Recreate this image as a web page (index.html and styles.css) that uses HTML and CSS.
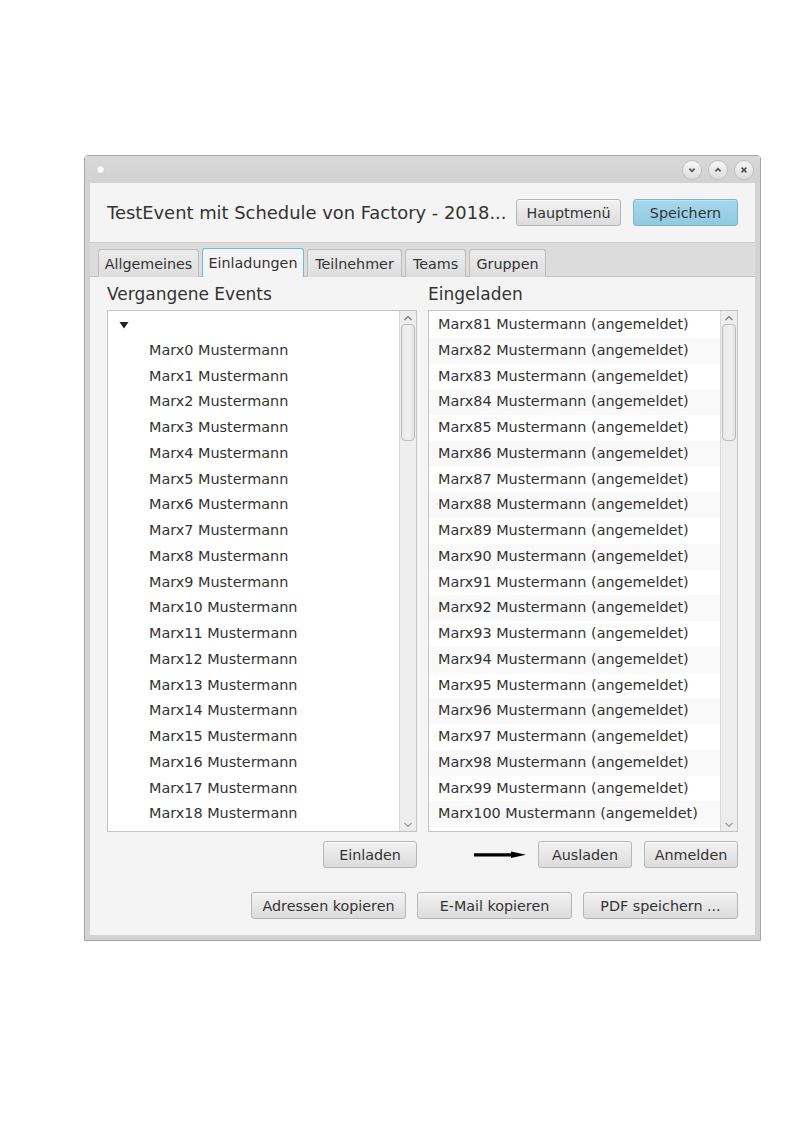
FILE: index.html
```html
<!DOCTYPE html>
<html lang="de">
<head>
<meta charset="utf-8">
<title>TestEvent</title>
<link rel="stylesheet" href="styles.css">
</head>
<body>
<div class="window">
  <div class="titlebar">
    <span class="dot"></span>
    <div class="controls">
      <span class="ctl"><svg width="10" height="10" viewBox="0 0 10 10"><path d="M2.4 3.6 L5 6.3 L7.6 3.6" fill="none" stroke="#555" stroke-width="1.7"/></svg></span>
      <span class="ctl"><svg width="10" height="10" viewBox="0 0 10 10"><path d="M2.4 6.4 L5 3.7 L7.6 6.4" fill="none" stroke="#555" stroke-width="1.7"/></svg></span>
      <span class="ctl"><svg width="10" height="10" viewBox="0 0 10 10"><path d="M2.6 2.6 L7.4 7.4 M7.4 2.6 L2.6 7.4" fill="none" stroke="#555" stroke-width="1.7"/></svg></span>
    </div>
  </div>
  <div class="client">
    <div class="header">
      <div class="title">TestEvent mit Schedule von Factory - 2018...</div>
      <button class="btn hb">Hauptmenü</button>
      <button class="btn hb primary">Speichern</button>
    </div>
    <div class="tabs">
      <div class="tab t1">Allgemeines</div>
      <div class="tab t2 active">Einladungen</div>
      <div class="tab t3">Teilnehmer</div>
      <div class="tab t4">Teams</div>
      <div class="tab t5">Gruppen</div>
    </div>
    <div class="pane">
      <div class="cols">
        <div class="col">
          <div class="label">Vergangene Events</div>
          <div class="list">
            <div class="rows">
              <div class="row root"><svg width="10" height="8" viewBox="0 0 10 8"><path d="M0.5 1 L9.5 1 L5 7.5 Z" fill="#222"/></svg></div>
              <div class="row child">Marx0 Mustermann</div>
              <div class="row child">Marx1 Mustermann</div>
              <div class="row child">Marx2 Mustermann</div>
              <div class="row child">Marx3 Mustermann</div>
              <div class="row child">Marx4 Mustermann</div>
              <div class="row child">Marx5 Mustermann</div>
              <div class="row child">Marx6 Mustermann</div>
              <div class="row child">Marx7 Mustermann</div>
              <div class="row child">Marx8 Mustermann</div>
              <div class="row child">Marx9 Mustermann</div>
              <div class="row child">Marx10 Mustermann</div>
              <div class="row child">Marx11 Mustermann</div>
              <div class="row child">Marx12 Mustermann</div>
              <div class="row child">Marx13 Mustermann</div>
              <div class="row child">Marx14 Mustermann</div>
              <div class="row child">Marx15 Mustermann</div>
              <div class="row child">Marx16 Mustermann</div>
              <div class="row child">Marx17 Mustermann</div>
              <div class="row child">Marx18 Mustermann</div>
            </div>
            <div class="scrollbar">
              <svg class="arr" width="10" height="6" viewBox="0 0 10 6"><path d="M1.5 5 L5 1.5 L8.5 5" fill="none" stroke="#777" stroke-width="1.2"/></svg>
              <div class="track"><div class="thumb"></div></div>
              <svg class="arr" width="10" height="6" viewBox="0 0 10 6"><path d="M1.5 1 L5 4.5 L8.5 1" fill="none" stroke="#999" stroke-width="1.2"/></svg>
            </div>
          </div>
          <div class="actions">
            <button class="btn ab">Einladen</button>
          </div>
        </div>
        <div class="col">
          <div class="label">Eingeladen</div>
          <div class="list">
            <div class="rows striped">
              <div class="row">Marx81 Mustermann (angemeldet)</div>
              <div class="row">Marx82 Mustermann (angemeldet)</div>
              <div class="row">Marx83 Mustermann (angemeldet)</div>
              <div class="row">Marx84 Mustermann (angemeldet)</div>
              <div class="row">Marx85 Mustermann (angemeldet)</div>
              <div class="row">Marx86 Mustermann (angemeldet)</div>
              <div class="row">Marx87 Mustermann (angemeldet)</div>
              <div class="row">Marx88 Mustermann (angemeldet)</div>
              <div class="row">Marx89 Mustermann (angemeldet)</div>
              <div class="row">Marx90 Mustermann (angemeldet)</div>
              <div class="row">Marx91 Mustermann (angemeldet)</div>
              <div class="row">Marx92 Mustermann (angemeldet)</div>
              <div class="row">Marx93 Mustermann (angemeldet)</div>
              <div class="row">Marx94 Mustermann (angemeldet)</div>
              <div class="row">Marx95 Mustermann (angemeldet)</div>
              <div class="row">Marx96 Mustermann (angemeldet)</div>
              <div class="row">Marx97 Mustermann (angemeldet)</div>
              <div class="row">Marx98 Mustermann (angemeldet)</div>
              <div class="row">Marx99 Mustermann (angemeldet)</div>
              <div class="row">Marx100 Mustermann (angemeldet)</div>
            </div>
            <div class="scrollbar">
              <svg class="arr" width="10" height="6" viewBox="0 0 10 6"><path d="M1.5 5 L5 1.5 L8.5 5" fill="none" stroke="#777" stroke-width="1.2"/></svg>
              <div class="track"><div class="thumb"></div></div>
              <svg class="arr" width="10" height="6" viewBox="0 0 10 6"><path d="M1.5 1 L5 4.5 L8.5 1" fill="none" stroke="#999" stroke-width="1.2"/></svg>
            </div>
          </div>
          <div class="actions">
            <svg class="pointer" width="52" height="10" viewBox="0 0 52 10"><path d="M0 3.2 H42 V6.4 H0 Z" fill="#000"/><path d="M37 1.6 L52 4.8 L37 8 Z" fill="#000"/></svg>
            <button class="btn ab">Ausladen</button>
            <button class="btn ab">Anmelden</button>
          </div>
        </div>
      </div>
      <div class="footer">
        <button class="btn fb">Adressen kopieren</button>
        <button class="btn fb">E-Mail kopieren</button>
        <button class="btn fb">PDF speichern ...</button>
      </div>
    </div>
  </div>
</div>
</body>
</html>
```
FILE: styles.css
```css
* { box-sizing: border-box; }
html, body { margin: 0; padding: 0; background: #ffffff; }
body {
  font-family: "DejaVu Sans", "Liberation Sans", sans-serif;
  color: #333333;
  padding: 155px 0 0 84px;
}
.window {
  width: 677px;
  height: 786px;
  background: #d3d3d3;
  border: 1px solid #a5a5a5;
  border-radius: 4px 4px 0 0;
  display: flex;
  flex-direction: column;
}
.titlebar {
  height: 27px;
  display: flex;
  align-items: center;
  padding: 0 0 0 12px;
  background: linear-gradient(#d9d9d9, #d1d1d1);
}
.dot {
  width: 7px; height: 7px; border-radius: 50%;
  background: #f7f7f7;
  box-shadow: 0 0 1px #aaa;
}
.controls { margin-left: auto; display: flex; gap: 6px; padding-right: 6px; }
.ctl {
  width: 20px; height: 20px; border-radius: 50%;
  background: linear-gradient(#f6f6f6, #dddddd);
  border: 1px solid #c0c0c0;
  display: flex; align-items: center; justify-content: center;
}
.client {
  flex: 1;
  margin: 0 5px 5px 5px;
  display: flex;
  flex-direction: column;
  background: #f4f4f4;
}
.header {
  height: 59px;
  display: flex;
  align-items: center;
  padding: 0 17px 0 17px;
}
.title {
  font-size: 17.9px; color: #333;
  white-space: nowrap;
  margin-right: auto;
}
.btn {
  font-family: "DejaVu Sans", "Liberation Sans", sans-serif;
  font-size: 14.3px;
  color: #333;
  height: 27px;
  border: 1px solid #b6b6b6;
  border-radius: 3px;
  background: linear-gradient(#f2f2f2, #dcdcdc);
  padding: 0;
  box-shadow: inset 0 1px 0 #fbfbfb;
  flex: none;
}
.hb { width: 105px; }
.hb + .hb { margin-left: 12px; }
.primary {
  background: linear-gradient(#a8d8ec, #8ec9e2);
  border-color: #84b1c5;
  box-shadow: inset 0 1px 0 #bfe3f2;
}
.tabs {
  height: 35px;
  background: #dcdcdc;
  border-top: 1px solid #cfcfcf;
  border-bottom: 1px solid #c2c2c2;
  display: flex;
  align-items: flex-end;
  padding-left: 8px;
  gap: 3px;
}
.tab {
  height: 28px;
  font-size: 14.3px;
  color: #333;
  border: 1px solid #bdbdbd;
  border-bottom: none;
  border-radius: 3px 3px 0 0;
  background: linear-gradient(#ececec, #dddddd);
  display: flex; align-items: center; justify-content: center;
  margin-bottom: -1px;
}
.t1 { width: 101px; }
.t2 { width: 102px; }
.t3 { width: 95px; }
.t4 { width: 61px; }
.t5 { width: 77px; }
.tab.active {
  background: #f4f4f4;
  border: 1px solid #65bde0;
  border-bottom: none;
  height: 29px;
}
.pane {
  flex: 1;
  display: flex;
  flex-direction: column;
  padding: 8px 16px 0 17px;
}
.cols {
  display: grid;
  grid-template-columns: 310px 310px;
  gap: 11px;
}
.col { display: flex; flex-direction: column; }
.label { font-size: 17px; height: 25px; line-height: 19px; color: #333; }
.list {
  height: 522px;
  border: 1px solid #c4c4c4;
  background: #ffffff;
  display: flex;
  overflow: hidden;
}
.rows { flex: 1; padding-top: 1px; }
.row {
  height: 25.75px;
  font-size: 14.4px;
  line-height: 25.75px;
  white-space: nowrap;
  padding-left: 9px;
}
.striped .row:nth-child(even) { background: #f9f9f9; }
.row.root { padding-left: 11px; display: flex; align-items: center; }
.row.child { padding-left: 41px; }
.scrollbar {
  width: 17px;
  background: #ededed;
  border-left: 1px solid #d8d8d8;
  display: flex;
  flex-direction: column;
  align-items: center;
}
.scrollbar .arr { margin: 4px 0 3px; flex: none; }
.track { flex: 1; width: 100%; padding: 0 1px; }
.thumb {
  height: 117px;
  border: 1px solid #bcbcbc;
  border-radius: 4px;
  background: linear-gradient(90deg, #e8e8e8, #f0f0f0 60%, #e2e2e2);
}
.actions {
  display: flex;
  justify-content: flex-end;
  align-items: center;
  gap: 12px;
  margin-top: 9px;
  height: 27px;
}
.ab { width: 94px; }
.footer {
  display: flex;
  justify-content: flex-end;
  gap: 11px;
  margin-top: 24px;
  padding-right: 1px;
}
.fb { width: 155px; }
```
